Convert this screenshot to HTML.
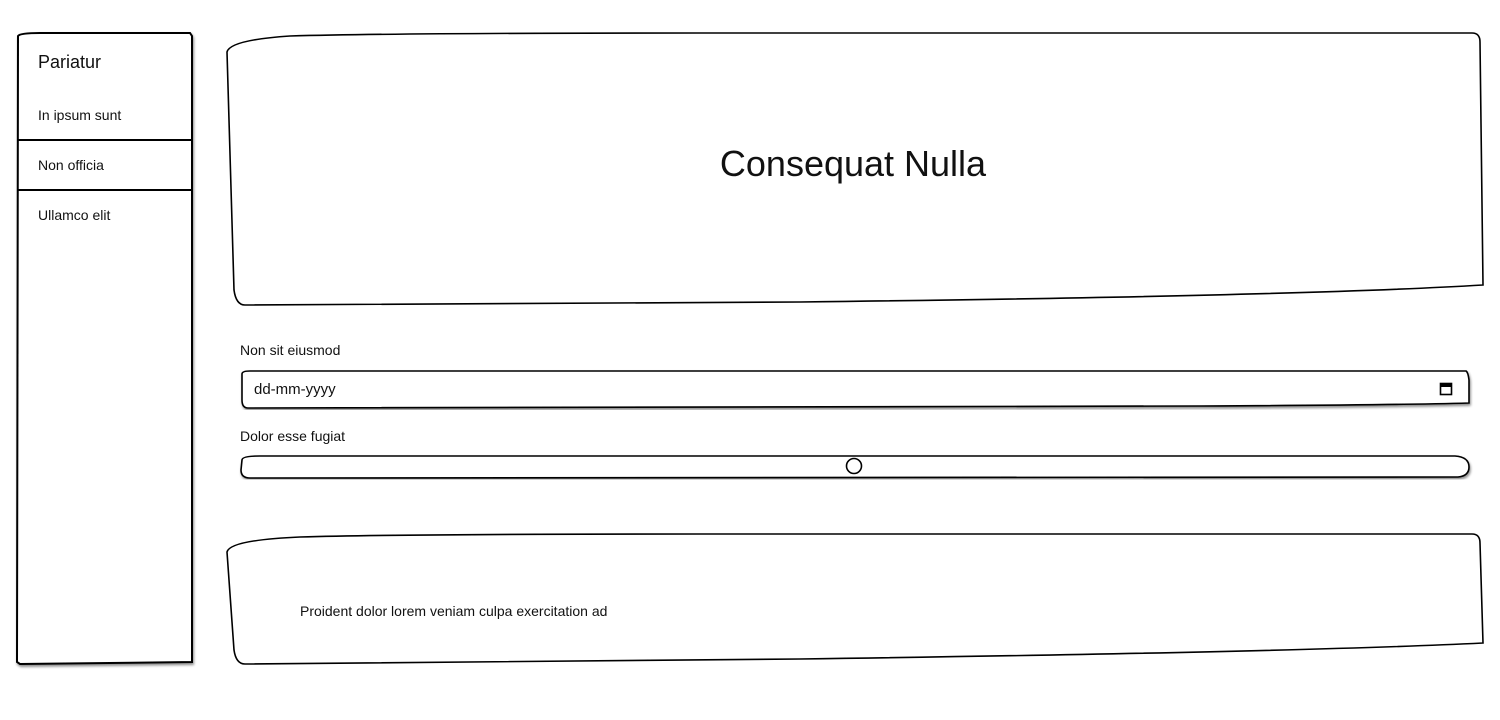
<!DOCTYPE html>
<html><head><meta charset="utf-8"><style>
html,body{margin:0;padding:0;background:#fff;width:1500px;height:720px;overflow:hidden;font-family:"Liberation Sans",sans-serif;color:#111}
.t{position:absolute;white-space:nowrap}
svg{position:absolute;left:0;top:0}
</style></head><body>
<svg width="1500" height="720" viewBox="0 0 1500 720">
<defs><filter id="sh" x="-5%" y="-5%" width="110%" height="110%"><feDropShadow dx="1" dy="2" stdDeviation="1.2" flood-color="#000" flood-opacity="0.45"/></filter></defs>
<!-- sidebar -->
<path d="M18 36 Q20 33 40 33 L190 33 L192 36 L192 662 L20 664 L17 662 Z" fill="#fff" stroke="#000" stroke-width="2" filter="url(#sh)"/>
<line x1="18" y1="140" x2="192" y2="140" stroke="#000" stroke-width="2"/>
<line x1="18" y1="190" x2="192" y2="190" stroke="#000" stroke-width="2"/>
<!-- hero -->
<path d="M227 52 Q230 40 290 36 Q400 33 700 33 L1472 33 Q1480 33 1480 42 L1483 285 Q1300 296 800 302 L245 305 Q236 305 234 290 Z" fill="none" stroke="#000" stroke-width="1.6"/>
<!-- date input -->
<path d="M242 374 Q242 371 250 371 L1466 371 Q1468 372 1469 380 L1469 403 Q1400 405 1200 406 L248 408 Q242 408 242 400 Z" fill="#fff" stroke="#000" stroke-width="1.6" filter="url(#sh)"/>
<rect x="1440.5" y="383.5" width="11" height="11" fill="none" stroke="#000" stroke-width="1.6"/>
<line x1="1440" y1="385.5" x2="1452" y2="385.5" stroke="#000" stroke-width="3"/>
<!-- slider -->
<path d="M242 460 Q242 456 260 456 L1455 456 Q1469 457 1469 467 Q1469 476 1458 477 L250 478 Q241 478 241 470 Z" fill="#fff" stroke="#000" stroke-width="1.6" filter="url(#sh)"/>
<circle cx="854" cy="466" r="7.5" fill="#fff" stroke="#000" stroke-width="1.6"/>
<!-- bottom box -->
<path d="M227 552 Q230 540 300 537 Q400 534 700 534 L1472 534 Q1480 534 1480 543 L1483 643 Q1300 652 800 659 L245 664 Q236 664 234 650 Z" fill="none" stroke="#000" stroke-width="1.6"/>
</svg>
<div class="t" style="left:38px;top:52px;font-size:18px">Pariatur</div>
<div class="t" style="left:38px;top:107px;font-size:14px">In ipsum sunt</div>
<div class="t" style="left:38px;top:157px;font-size:14px">Non officia</div>
<div class="t" style="left:38px;top:207px;font-size:14px">Ullamco elit</div>
<div class="t" style="left:0;width:1706px;text-align:center;top:143px;font-size:36px">Consequat Nulla</div>
<div class="t" style="left:240px;top:342px;font-size:14px">Non sit eiusmod</div>
<div class="t" style="left:254px;top:381px;font-size:15px">dd-mm-yyyy</div>
<div class="t" style="left:240px;top:428px;font-size:14px">Dolor esse fugiat</div>
<div class="t" style="left:300px;top:603px;font-size:14px">Proident dolor lorem veniam culpa exercitation ad</div>
</body></html>
